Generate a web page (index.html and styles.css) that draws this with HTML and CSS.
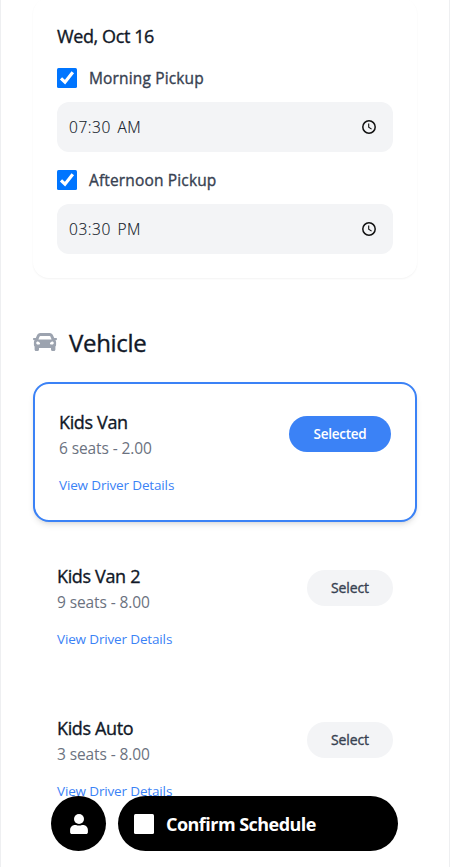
FILE: index.html
```html
<!DOCTYPE html>
<html lang="en">
<head>
<meta charset="utf-8">
<meta name="viewport" content="width=device-width, initial-scale=1">
<title>Schedule</title>
<link rel="stylesheet" href="styles.css">
</head>
<body>
<svg width="0" height="0" class="symbols" aria-hidden="true">
  <symbol id="check" viewBox="0 0 20 20"><rect width="20" height="20" rx="1.5" fill="#0075ff"/><path d="M4 10.300 8 14.200 15.800 4.300" fill="none" stroke="#fff" stroke-width="3.200"/></symbol>
  <symbol id="clock" viewBox="0 0 14 14"><circle cx="7" cy="7" r="6.2" fill="none" stroke="#111" stroke-width="1.5"/><path d="M6.7 3.5V7.2L9.6 9.1" fill="none" stroke="#111" stroke-width="1.1"/></symbol>
</svg>
<div class="frame">
  <main class="content">
    <section class="card day">
      <h3 class="day-title"><span>Wed, Oct 16</span></h3>
      <div class="pickup"><svg class="check"><use href="#check"/></svg><span>Morning Pickup</span></div>
      <div class="time"><span>07:30 AM</span><svg class="clock"><use href="#clock"/></svg></div>
      <div class="pickup second"><svg class="check"><use href="#check"/></svg><span>Afternoon Pickup</span></div>
      <div class="time"><span>03:30 PM</span><svg class="clock"><use href="#clock"/></svg></div>
    </section>

    <h2 class="heading">
      <svg class="car" viewBox="0 0 24 24" fill="#9ca3af"><path fill-rule="evenodd" d="M7.3 3h9.4c1.6 0 2.8.9 3.4 2.4l1.1 2.7h2.1c.5 0 .8.4.7.9l-.2.8c-.1.3-.4.5-.7.5h-.7c.5.6.7 1.3.7 2v2.4c0 .7-.2 1.3-.7 1.8v3c0 .8-.6 1.5-1.4 1.5h-1.6c-.8 0-1.4-.7-1.4-1.5V18H6v1.5c0 .8-.6 1.5-1.4 1.5H3c-.8 0-1.4-.7-1.4-1.5v-3c-.5-.5-.7-1.1-.7-1.8v-2.4c0-.7.2-1.4.7-2H.9c-.3 0-.6-.2-.7-.5L0 9c-.1-.5.2-.9.7-.9h2.1l1.1-2.7C4.500 3.900 5.700 3 7.300 3Zm0 3c-.3 0-.6.2-.7.5L5.400 9.500h13.200l-1.200-3c-.1-.3-.4-.5-.7-.5H7.300ZM4.800 11.400c-.9 0-1.600.6-1.600 1.500s.7 1.500 1.600 1.500c.8 0 2.300.2 2.300-.7 0-.9-1.400-2.300-2.300-2.300Zm14.400 0c-.9 0-2.300 1.400-2.300 2.300s1.500.7 2.300.7c.9 0 1.600-.6 1.600-1.500s-.7-1.500-1.600-1.500Z"/></svg>
      <span>Vehicle</span>
    </h2>

    <div class="vehicles">
      <article class="card vehicle selected">
        <div class="row"><div><h3 class="name"><span>Kids Van</span></h3><p class="seats"><span>6 seats - 2.00</span></p></div><button class="pick"><span>Selected</span></button></div>
        <a class="details"><span>View Driver Details</span></a>
      </article>
      <article class="card vehicle">
        <div class="row"><div><h3 class="name"><span>Kids Van 2</span></h3><p class="seats"><span>9 seats - 8.00</span></p></div><button class="pick"><span>Select</span></button></div>
        <a class="details"><span>View Driver Details</span></a>
      </article>
      <article class="card vehicle">
        <div class="row"><div><h3 class="name"><span>Kids Auto</span></h3><p class="seats"><span>3 seats - 8.00</span></p></div><button class="pick"><span>Select</span></button></div>
        <a class="details"><span>View Driver Details</span></a>
      </article>
    </div>
  </main>
  <footer class="bar">
    <button class="profile" aria-label="Profile"><svg width="18" height="20" viewBox="0 0 18 20" fill="#fff"><circle cx="9" cy="5" r="5"/><path d="M5 11h1c1.900.8 4.100.8 6 0h1c2.800 0 4.900 2.200 4.900 5v2.200c0 1-.8 1.800-1.800 1.800H1.900c-1 0-1.800-.8-1.800-1.800V16c0-2.800 2.100-5 4.900-5Z"/></svg></button>
    <button class="confirm"><i class="box"></i><span>Confirm Schedule</span></button>
  </footer>
</div>
</body>
</html>
```

FILE: styles.css
```css
* { box-sizing: border-box; margin: 0; padding: 0; }
body { height: 867px; overflow: hidden; background: #fff; font-family: "Segoe UI", "Open Sans", "Noto Sans", sans-serif; font-size: 16px; line-height: 24px; color: #111827; }
button { border: 0; font: inherit; color: inherit; }
span { white-space: nowrap; }
.symbols { position: absolute; }
.frame { height: 867px; overflow: hidden; border: solid #eeeff1; border-width: 0 1px; }
.content { padding: 0 32px; }
.card { background: #fff; border-radius: 16px; padding: 24px; }
.day { margin-top: -2px; box-shadow: 0 1px 2px rgba(0,0,0,.05); }
.day-title, .pickup, .heading, .name, .pick { -webkit-text-stroke: .35px currentColor; }
.day-title { font-size: 18px; line-height: 28px; font-weight: 500; margin-bottom: 16px; letter-spacing: -.4px; }
.pickup { display: flex; align-items: center; gap: 12px; margin-bottom: 12px; font-size: 15.500px; font-weight: 500; color: #374151; letter-spacing: .15px; }
.second { margin-top: 16px; }
.check { width: 20px; height: 20px; }
.time { height: 50px; display: flex; align-items: center; justify-content: space-between; padding: 0 17px 0 12px; border-radius: 12px; background: #f3f4f6; color: #111827; }
.time span { font-size: 15.500px; font-weight: 300; letter-spacing: .55px; word-spacing: 2px; -webkit-text-stroke: .15px currentColor; }
.clock { width: 14px; height: 14px; }
.heading { display: flex; align-items: center; gap: 12px; margin: 49px 0 23px; font-size: 24px; line-height: 32px; font-weight: 500; letter-spacing: -.3px; }
.car { width: 24px; height: 24px; margin-top: -2px; }
.vehicles { display: flex; flex-direction: column; gap: 16px; }
.selected { border: 2px solid #3b82f6; box-shadow: 0 4px 6px -1px rgba(0,0,0,.1), 0 2px 4px -2px rgba(0,0,0,.1); }
.row { display: flex; align-items: center; justify-content: space-between; margin-bottom: 12px; }
.name { font-size: 18px; line-height: 28px; font-weight: 500; letter-spacing: -.35px; }
.seats { color: #6b7280; font-size: 15.500px; letter-spacing: -.1px; }
.details { display: block; height: 24px; padding-top: 1px; color: #3b82f6; font-size: 13.500px; letter-spacing: -.15px; }
.pick { width: 86px; height: 36px; border-radius: 18px; background: #f3f4f6; color: #374151; font-size: 14px; font-weight: 500; line-height: 20px; letter-spacing: -.1px; }
.selected .pick { width: 102px; background: #3b82f6; color: #fff; font-weight: 600; font-size: 13.500px; letter-spacing: -.25px; -webkit-text-stroke: 0; }
.bar { position: fixed; left: 51px; bottom: 16px; display: flex; gap: 12px; }
.profile { width: 55px; height: 55px; border-radius: 50%; background: #000; display: flex; align-items: center; justify-content: center; }
.confirm { width: 280px; height: 55px; border-radius: 28px; background: #000; color: #fff; display: flex; align-items: center; gap: 12px; padding-left: 16px; font-size: 18px; font-weight: 700; letter-spacing: -.53px; }
.box { width: 20px; height: 20px; background: #fff; border-radius: 1.500px; }
```
